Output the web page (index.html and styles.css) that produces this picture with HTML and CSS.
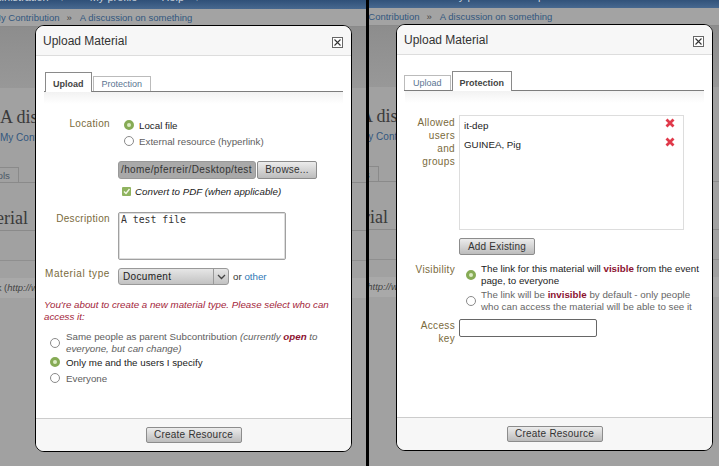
FILE: index.html
```html
<!DOCTYPE html>
<html lang="en">
<head>
    <meta charset="UTF-8">
    <title>Upload Material</title>
    <link rel="stylesheet" href="styles.css">
</head>
<body>
<div class="shots">

    <div class="pane pane-left">
        <div class="page">
            <div class="topbar"><span>Administration</span><i>▾</i><span>My profile</span><span class="help">Help</span><i>▾</i></div>
            <div class="crumbs"><a>My Contribution</a><b>»</b><a>A discussion on something</a></div>
            <div class="band"></div>
            <h1 class="page-title">A discussion on something</h1>
            <div class="page-sub">My Contribution</div>
            <div class="page-tabs"><span>Tools</span></div>
            <h2 class="page-head">Material</h2>
            <div class="page-gap"></div>
            <div class="page-row">Link (<em>http://www.example.org</em>)</div>
        </div>

        <div class="dialog">
            <div class="dialog-head">
                <span class="dialog-title">Upload Material</span>
                <span class="close"><svg width="9" height="9" viewBox="0 0 9 9"><path d="M1.5 1.5l6 6M7.5 1.5l-6 6" stroke="#333" stroke-width="1.1" fill="none"/></svg></span>
            </div>
            <div class="dialog-body">
                <div class="tabs">
                    <span class="tab active">Upload</span>
                    <span class="tab">Protection</span>
                </div>
                <div class="tabs-fade"></div>

                <div class="row row-location">
                    <label class="lbl">Location</label>
                    <div>
                        <div class="opt on"><span class="radio checked"></span>Local file</div>
                        <div class="opt"><span class="radio"></span>External resource (hyperlink)</div>
                    </div>
                </div>
                <div class="row row-file">
                    <span></span>
                    <div class="file">
                        <span class="file-path">/home/pferreir/Desktop/test</span>
                        <span class="btn btn-browse">Browse...</span>
                    </div>
                </div>
                <div class="row row-pdf">
                    <span></span>
                    <div class="pdf">
                        <svg width="9" height="9" viewBox="0 0 9 9"><rect width="9" height="9" rx="1" fill="#8fb35f"/><path d="M2 4.5l2 2 3.5-4.5" stroke="#f4f8e8" stroke-width="1.4" fill="none"/></svg>
                        <em>Convert to PDF (when applicable)</em>
                    </div>
                </div>
                <div class="row row-desc">
                    <label class="lbl">Description</label>
                    <div class="area">A test file</div>
                </div>
                <div class="row row-type">
                    <label class="lbl">Material type</label>
                    <div class="type">
                        <span class="select">Document<span class="select-arrow"><svg width="9" height="6" viewBox="0 0 9 6"><path d="M1 1l3.500 3.500L8 1" stroke="#444" stroke-width="1.300" fill="none"/></svg></span></span>
                        <span>or <a class="link">other</a></span>
                    </div>
                </div>
                <p class="warn">You're about to create a new material type. Please select who can access it:</p>
                <div class="access">
                    <div class="opt opt-wrap"><span class="radio"></span><span>Same people as parent Subcontribution <em>(currently <b class="red">open</b> to everyone, but can change)</em></span></div>
                    <div class="opt on"><span class="radio checked"></span>Only me and the users I specify</div>
                    <div class="opt"><span class="radio"></span>Everyone</div>
                </div>
            </div>
            <div class="dialog-foot"><span class="btn btn-create">Create Resource</span></div>
        </div>
    </div>

    <div class="divider"></div>

    <div class="pane pane-right">
        <div class="page">
            <div class="topbar"><span>Administration</span><i>▾</i><span>My profile</span><span class="help">Help</span><i>▾</i></div>
            <div class="crumbs"><a>My Contribution</a><b>»</b><a>A discussion on something</a></div>
            <div class="band"></div>
            <h1 class="page-title">A discussion on something</h1>
            <div class="page-sub">My Contribution</div>
            <div class="page-tabs"><span>Tools</span></div>
            <h2 class="page-head">Material</h2>
            <div class="page-gap"></div>
            <div class="page-row">Link (<em>http://www.example.org</em>)</div>
        </div>

        <div class="dialog">
            <div class="dialog-head">
                <span class="dialog-title">Upload Material</span>
                <span class="close"><svg width="9" height="9" viewBox="0 0 9 9"><path d="M1.5 1.5l6 6M7.5 1.5l-6 6" stroke="#333" stroke-width="1.1" fill="none"/></svg></span>
            </div>
            <div class="dialog-body">
                <div class="tabs">
                    <span class="tab">Upload</span>
                    <span class="tab active">Protection</span>
                </div>
                <div class="tabs-fade"></div>

                <div class="prow prow-users">
                    <label class="lbl">Allowed users and groups</label>
                    <div class="users">
                        <div class="user">it-dep<svg width="10" height="10" viewBox="0 0 10 10"><path d="M1.500 1.500l7 7M8.500 1.500l-7 7" stroke="#e0394a" stroke-width="2.800" fill="none"/></svg></div>
                        <div class="user">GUINEA, Pig<svg width="10" height="10" viewBox="0 0 10 10"><path d="M1.500 1.500l7 7M8.500 1.500l-7 7" stroke="#e0394a" stroke-width="2.800" fill="none"/></svg></div>
                    </div>
                </div>
                <div class="prow prow-add">
                    <span></span>
                    <div><span class="btn btn-add">Add Existing</span></div>
                </div>
                <div class="prow prow-vis">
                    <label class="lbl">Visibility</label>
                    <div class="vis">
                        <div class="opt opt-wrap on"><span class="radio checked"></span><span>The link for this material will <b class="red">visible</b> from the event page, to everyone</span></div>
                        <div class="opt opt-wrap"><span class="radio"></span><span>The link will be <b class="red">invisible</b> by default - only people who can access the material will be able to see it</span></div>
                    </div>
                </div>
                <div class="prow prow-key">
                    <label class="lbl">Access key</label>
                    <div class="key"></div>
                </div>
            </div>
            <div class="dialog-foot"><span class="btn btn-create">Create Resource</span></div>
        </div>
    </div>

</div>
</body>
</html>
```

FILE: styles.css
```css
html, body {
    margin: 0;
    padding: 0;
    height: 466px;
    overflow: hidden;
    font-family: "Liberation Sans", Arial, sans-serif;
    font-size: 9.75px;
}

.shots {
    display: flex;
    width: 719px;
    height: 466px;
}

.pane {
    position: relative;
    height: 466px;
    overflow: hidden;
    background-color: #a1a1a1;
}

.pane-left {
    width: 366px;
}

.pane-right {
    width: 350px;
}

.divider {
    width: 3px;
    background-color: #000;
}

/* dimmed page behind the dialog */
.page {
    width: 420px;
}

.pane-right .page {
    margin-left: -9px;
    margin-top: -1px;
}

.topbar {
    display: flex;
    height: 9px;
    overflow: hidden;
    align-items: flex-start;
    background: linear-gradient(#2f5078, #47688f);
    color: #c9d2dc;
    font-size: 11px;
    line-height: 11px;
    white-space: nowrap;
}

.topbar span {
    margin-top: -8px;
}

.topbar span:first-child {
    margin-left: -21px;
}

.topbar i {
    font-style: normal;
    font-size: 8px;
    line-height: 8px;
    margin: -5px 26px 0 11px;
}

.topbar .help {
    margin-left: 24px;
}

.crumbs {
    height: 18px;
    box-sizing: border-box;
    border-bottom: 1px solid #8a8a8a;
    background-color: #a3a3a3;
    color: #32577f;
    font-size: 9.500px;
    line-height: 18px;
    white-space: nowrap;
}

.crumbs a:first-child {
    margin-left: -7px;
}

.crumbs b {
    font-weight: normal;
    margin: 0 8px 0 7px;
    color: #444;
}

.band {
    height: 61px;
    background: linear-gradient(#8d8d8d, #989898);
}

.page-title {
    margin: 0;
    height: 46px;
    box-sizing: border-box;
    padding-top: 17px;
    font-family: "Liberation Serif", serif;
    font-size: 18px;
    line-height: 24px;
    font-weight: normal;
    color: #3a3a3a;
    white-space: nowrap;
}

.page-sub {
    color: #32577f;
    font-size: 10px;
    line-height: 12px;
    height: 32px;
    margin-top: -2px;
    white-space: nowrap;
}

.page-tabs {
    height: 15px;
    border-bottom: 1px solid #8a8a8a;
    margin-top: 3px;
}

.page-tabs span {
    display: inline-block;
    box-sizing: border-box;
    height: 16px;
    width: 35px;
    margin-left: -16px;
    border: 1px solid #8a8a8a;
    border-left: 0;
    border-bottom: 0;
    line-height: 15px;
    text-align: right;
    padding-right: 8px;
    color: #4c5a68;
}

.page-head {
    margin: 0 0 0 -33px;
    height: 48px;
    box-sizing: border-box;
    border-bottom: 1px solid #8a8a8a;
    padding-top: 23px;
    font-family: "Liberation Serif", serif;
    font-size: 18px;
    line-height: 24px;
    font-weight: normal;
    color: #3a3a3a;
}

.page-gap {
    height: 29px;
    border-bottom: 1px solid #8f8f8f;
}

.page-row {
    height: 20px;
    margin-top: 17px;
    margin-left: -16px;
    background-color: #a9a9a9;
    line-height: 20px;
    font-size: 9.500px;
    color: #444;
    white-space: nowrap;
}

/* dialog */
.dialog {
    position: absolute;
    display: flex;
    flex-direction: column;
    box-sizing: border-box;
    width: 317px;
    height: 427px;
    border: 1px solid #000;
    border-radius: 9px;
    overflow: hidden;
    background-color: #fff;
    color: #444;
}

.pane-left .dialog {
    left: 35px;
    top: 25px;
}

.pane-right .dialog {
    left: 27px;
    top: 24px;
}

.dialog-head {
    display: flex;
    justify-content: space-between;
    align-items: flex-start;
    height: 30px;
    box-sizing: border-box;
    border-bottom: 1px solid #ddd;
    background-color: #f7f7f7;
    padding: 8px 8px 0 7px;
}

.dialog-title {
    font-size: 12px;
    line-height: 15px;
    color: #333;
}

.close {
    display: flex;
    align-items: center;
    justify-content: center;
    box-sizing: border-box;
    width: 11px;
    height: 11px;
    margin-top: 3px;
    border: 1px solid #666;
    background-color: #fff;
}

.dialog-body {
    flex: 1;
    padding: 16px 8px 0 8px;
}

.pane-left .tabs {
    padding-left: 1px;
}

.pane-right .tabs {
    margin-left: -1px;
}

.tabs {
    display: flex;
    align-items: flex-end;
    gap: 1px;
    height: 19px;
    border-bottom: 1px solid #7d7d7d;
}

.tab {
    box-sizing: border-box;
    height: 15px;
    padding: 0 8px;
    border: 1px solid #bbb;
    border-bottom: 0;
    background-color: #fff;
    color: #5a7592;
    font-size: 9px;
    line-height: 15px;
}

.tab.active {
    height: 20px;
    margin-bottom: -1px;
    padding: 2px 7px 0 7px;
    border-color: #8a8a8a;
    color: #444;
    font-weight: bold;
    line-height: 19px;
}

.tabs-fade {
    height: 12px;
    background: linear-gradient(#f2f2f2, #fff);
}

.row {
    display: grid;
    grid-template-columns: 66px 1fr;
    column-gap: 8px;
}

.prow {
    display: grid;
    grid-template-columns: 50px 1fr;
    column-gap: 4px;
}

.lbl {
    text-align: right;
    color: #7a6a3c;
    font-size: 10px;
    line-height: 13px;
    letter-spacing: .35px;
}

.prow .lbl {
    width: min-content;
    margin-left: auto;
}

.opt {
    display: flex;
    align-items: center;
    height: 16px;
    color: #5e5e5e;
    white-space: nowrap;
}

.opt.on {
    color: #222;
}

.opt-wrap {
    height: auto;
    white-space: normal;
    line-height: 11.500px;
}

.radio {
    flex: none;
    box-sizing: border-box;
    width: 10px;
    height: 10px;
    margin-right: 5px;
    border: 1px solid #8a8a8a;
    border-radius: 50%;
    background-color: #fff;
}

.radio.checked {
    border: 3px solid #86ab55;
    background-color: #dcebc4;
}

.row-location {
    margin-top: 13px;
}

.row-location .radio {
    margin-left: 6px;
}

.row-file {
    margin-top: 12px;
}

.file {
    display: flex;
    gap: 1px;
}

.file-path {
    box-sizing: border-box;
    width: 138px;
    height: 18px;
    border: 1px solid #999;
    border-radius: 3px;
    background-color: #a9a9a9;
    padding-left: 2px;
    color: #333;
    font-size: 10px;
    line-height: 16px;
    letter-spacing: .38px;
    white-space: nowrap;
    overflow: hidden;
}

.btn {
    display: inline-block;
    box-sizing: border-box;
    border: 1px solid #8c8c8c;
    border-radius: 2px;
    background: linear-gradient(#ececec, #bcbcbc);
    color: #333;
    font-size: 10px;
    text-align: center;
    letter-spacing: .22px;
}

.btn-browse {
    width: 60px;
    height: 18px;
    line-height: 16px;
}

.row-pdf {
    margin-top: 6px;
}

.pdf {
    display: flex;
    align-items: center;
    gap: 4px;
    height: 12px;
    padding-left: 4px;
    color: #222;
}

.row-desc {
    margin-top: 15px;
}

.area {
    box-sizing: border-box;
    width: 168px;
    height: 48px;
    border: 1px solid #a0a0a0;
    border-radius: 2px;
    box-shadow: inset 0 0 0 1px #ddd;
    padding: 1px 2px;
    font-family: "DejaVu Sans Mono", monospace;
    font-size: 9.800px;
    line-height: 12px;
    color: #333;
}

.row-type {
    margin-top: 8px;
}

.row-type .lbl {
    line-height: 12px;
    letter-spacing: .6px;
}

.type {
    display: flex;
    align-items: center;
    gap: 4px;
    color: #333;
}

.select {
    display: flex;
    justify-content: space-between;
    box-sizing: border-box;
    width: 111px;
    height: 17px;
    border: 1px solid #999;
    border-radius: 3px;
    background: linear-gradient(#e6e6e6, #c2c2c2);
    padding-left: 4px;
    font-size: 10px;
    line-height: 15px;
    letter-spacing: .35px;
    color: #222;
}

.select-arrow {
    display: flex;
    align-items: center;
    justify-content: center;
    width: 14px;
    border-left: 1px solid #999;
}

.link {
    color: #2f78b5;
}

.warn {
    margin: 14px 0 0 0;
    color: #a3243a;
    line-height: 12px;
    font-style: italic;
}

.access {
    margin: 8px 0 0 6px;
}

.access .radio {
    margin-right: 6px;
}

.red {
    color: #8c1230;
}

.dialog-foot {
    height: 33px;
    box-sizing: border-box;
    border-top: 1px solid #ccc;
    background-color: #f7f7f7;
    padding-top: 8px;
    text-align: center;
}

.btn-create {
    width: 96px;
    height: 16px;
    line-height: 14px;
}

/* protection tab */
.prow-users {
    margin-top: 12px;
}

.prow-users .lbl {
    padding-top: 1px;
}

.users {
    box-sizing: border-box;
    width: 225px;
    height: 115px;
    border: 1px solid #ddd;
    padding: 1px 8px 0 4px;
    color: #222;
}

.user {
    display: flex;
    justify-content: space-between;
    height: 18.500px;
    line-height: 18px;
}

.user svg {
    margin-top: 1px;
}

.prow-add {
    margin-top: 8px;
}

.btn-add {
    width: 76px;
    height: 17px;
    line-height: 15px;
}

.prow-vis {
    margin-top: 8px;
}

.vis .radio {
    margin-left: 7px;
}

.vis .opt {
    color: #666;
}

.vis .opt.on {
    color: #222;
    margin-bottom: 3px;
}

.prow-key {
    margin-top: 7px;
}

.key {
    box-sizing: border-box;
    width: 138px;
    height: 18px;
    border: 1px solid #666;
    border-radius: 2px;
    background-color: #fff;
}
```
